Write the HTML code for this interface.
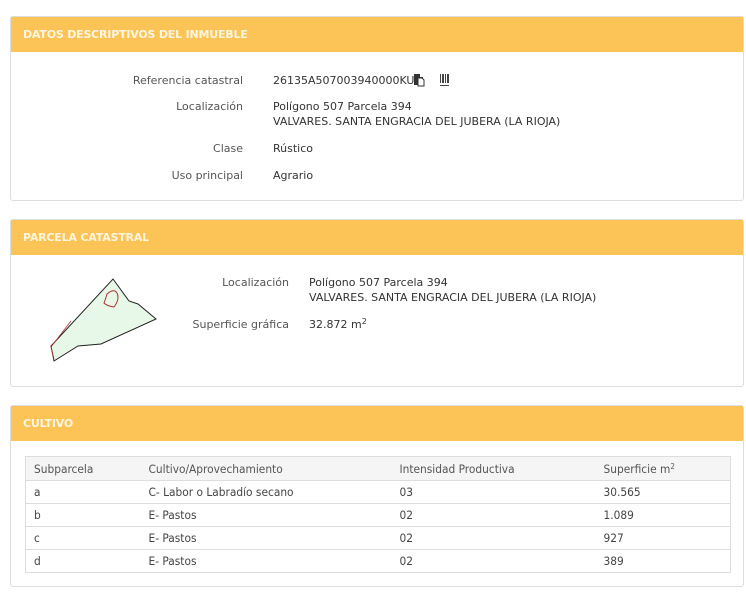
<!DOCTYPE html>
<html><head><meta charset="utf-8"><style>
*{margin:0;padding:0;box-sizing:border-box}
body{width:746px;height:600px;background:#fff;font-family:"DejaVu Sans","Liberation Sans",sans-serif;font-size:11px;color:#333;position:relative;overflow:hidden}
.panel{position:absolute;left:10px;width:734px;border:1px solid #ddd;border-radius:3px;background:#fff}
.hd{background:#fcc457;height:35px;color:#fff6e0;font-weight:bold;font-size:11px;padding:11px 12px;font-family:"DejaVu Sans","Liberation Sans",sans-serif;letter-spacing:-0.2px}
.t{position:absolute;white-space:nowrap;line-height:15px}
.r{text-align:right;color:#555}
sup{font-size:8px;line-height:0;vertical-align:4px}
table{position:absolute;left:14px;top:50px;width:706px;border-collapse:collapse;border:1px solid #ddd;font-family:"DejaVu Sans Condensed","DejaVu Sans",sans-serif;font-size:11.8px}
td{height:23px;border-top:1px solid #ddd;padding:0 8px;color:#444}
tr.h td{background:#f5f5f5;height:24px;border-top:none;color:#555}
</style></head><body>
<div class="panel" style="top:16px;height:185px">
<div class="hd">DATOS DESCRIPTIVOS DEL INMUEBLE</div>
<div class="t r" style="right:500px;top:56px">Referencia catastral</div>
<div class="t" style="left:262px;top:56px">26135A507003940000KU</div>
<svg class="t" style="left:402px;top:56px" width="14" height="14"><path d="M1 1h6v3h3v8H1z" fill="#333"/><path d="M5 5h4l2 2v6H5z" fill="#fff" stroke="#333"/></svg>
<svg class="t" style="left:428px;top:56px" width="12" height="14"><g fill="#444"><rect x="1" y="1" width="1" height="9"/><rect x="3" y="1" width="2" height="9"/><rect x="6" y="1" width="1" height="9"/><rect x="8" y="1" width="2" height="9"/><rect x="1" y="12" width="9" height="1"/></g></svg>
<div class="t r" style="right:500px;top:82px">Localización</div>
<div class="t" style="left:262px;top:82px">Polígono 507 Parcela 394<br>VALVARES. SANTA ENGRACIA DEL JUBERA (LA RIOJA)</div>
<div class="t r" style="right:500px;top:124px">Clase</div>
<div class="t" style="left:262px;top:124px">Rústico</div>
<div class="t r" style="right:500px;top:151px">Uso principal</div>
<div class="t" style="left:262px;top:151px">Agrario</div>
</div>
<div class="panel" style="top:219px;height:168px">
<div class="hd">PARCELA CATASTRAL</div>
<svg style="position:absolute;left:-10px;top:-219px" width="200" height="400"><path d="M112,278 L128,300 L137,303 L155,318 L100,343 L77,345 L53,360 L50,345 Z" fill="#e8f8e8" stroke="#222" stroke-width="1"/><path d="M53,358 L50,346 L70,320" fill="none" stroke="#a33" stroke-width="0.8"/><path d="M106,293 Q113,287 116,292 Q119,298 113,306 Q106,305 103,302 Q105,297 106,293Z" fill="none" stroke="#a33" stroke-width="1"/></svg>
<div class="t r" style="right:454px;top:55px">Localización</div>
<div class="t" style="left:298px;top:55px">Polígono 507 Parcela 394<br>VALVARES. SANTA ENGRACIA DEL JUBERA (LA RIOJA)</div>
<div class="t r" style="right:454px;top:97px">Superficie gráfica</div>
<div class="t" style="left:298px;top:97px">32.872 m<sup>2</sup></div>
</div>
<div class="panel" style="top:405px;height:182px">
<div class="hd">CULTIVO</div>
<table>
<tr class="h"><td style="width:115px">Subparcela</td><td style="width:251px">Cultivo/Aprovechamiento</td><td style="width:204px">Intensidad Productiva</td><td>Superficie m<sup>2</sup></td></tr>
<tr><td>a</td><td>C- Labor o Labradío secano</td><td>03</td><td>30.565</td></tr>
<tr><td>b</td><td>E- Pastos</td><td>02</td><td>1.089</td></tr>
<tr><td>c</td><td>E- Pastos</td><td>02</td><td>927</td></tr>
<tr><td>d</td><td>E- Pastos</td><td>02</td><td>389</td></tr>
</table>
</div>
</body></html>
